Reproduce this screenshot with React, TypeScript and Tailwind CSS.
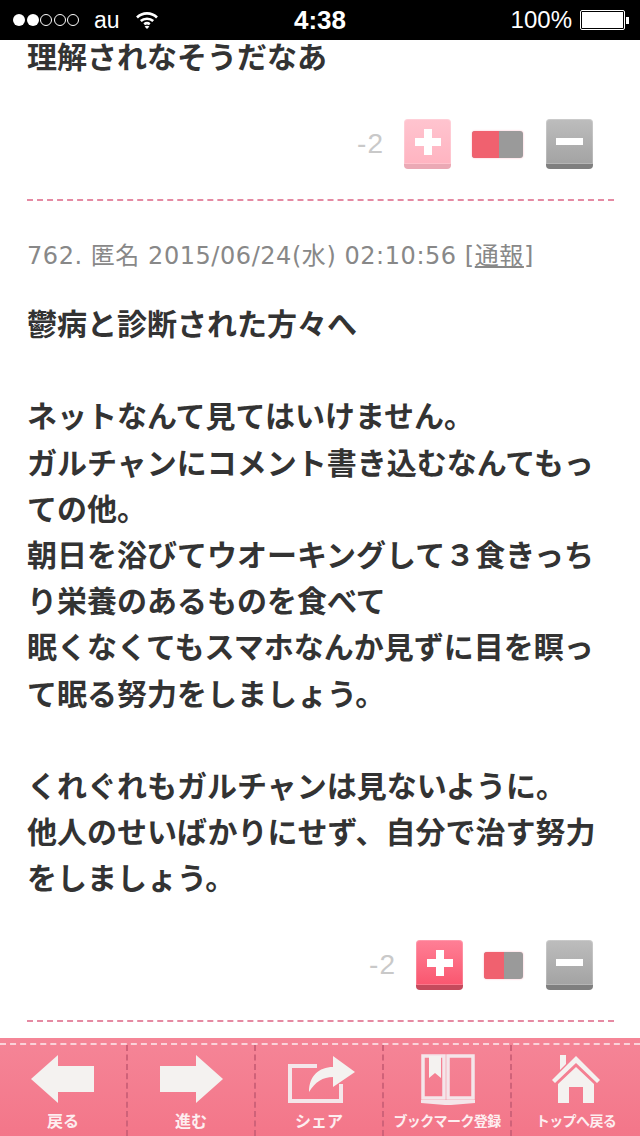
const jp = "font-['Noto_Sans_CJK_JP','Liberation_Sans',sans-serif]"

function StatusBar() {
  return (
    <div className="h-10 shrink-0 bg-black text-white flex items-center justify-between pl-[13px] pr-[11px] font-['Liberation_Sans',sans-serif] relative">
      <div className="flex items-center">
        <div className="flex gap-[1.5px]">
          <span className="w-3 h-3 rounded-full bg-white" />
          <span className="w-3 h-3 rounded-full bg-white" />
          <span className="w-3 h-3 rounded-full border border-white" />
          <span className="w-3 h-3 rounded-full border border-white" />
          <span className="w-3 h-3 rounded-full border border-white" />
        </div>
        <span className="ml-[15px] text-[23px] leading-none">au</span>
        <svg className="ml-[16px]" width="22" height="18" viewBox="0 0 22 18" fill="none" stroke="white" strokeWidth="2.6">
          <path d="M1 6.5 C6.5 1 15.5 1 21 6.5" />
          <path d="M4.8 10 C8 7 14 7 17.2 10" />
          <path d="M8.2 13.2 C9.8 12 12.2 12 13.8 13.2" />
          <path d="M11 18 L8.6 15.4 C10 14.6 12 14.6 13.4 15.4 Z" fill="white" stroke="none" />
        </svg>
      </div>
      <span className="absolute left-[240px] w-[160px] text-center text-[26px] font-bold leading-none">4:38</span>
      <div className="flex items-center">
        <span className="text-[24px] leading-none">100%</span>
        <div className="ml-[8px] w-[45px] h-[20px] border border-white rounded-[2px] p-[1px]">
          <div className="w-full h-full bg-white" />
        </div>
        <span className="ml-px w-[3px] h-[7px] bg-white" />
      </div>
    </div>
  )
}

function VoteRow({ faded, barWidth, redWidth, className }: { faded?: boolean; barWidth: string; redWidth: string; className: string }) {
  return (
    <div className={`flex items-center justify-end pr-[47px] ${className}`}>
      <span className="text-[28px] tracking-[1px] leading-none text-[#c9c9c9] font-['Liberation_Sans',sans-serif] mr-[20px]">-2</span>
      <div className={`w-[47px] h-[50px] rounded-[4px] flex items-center justify-center border-b-[5px] shadow-[inset_0_0_0_1px_rgba(255,255,255,0.2)] ${faded ? "bg-gradient-to-b from-[#ffc4cf] to-[#ffb4c1] border-[#eba9b5]" : "bg-gradient-to-b from-[#ff7f96] to-[#f9566f] border-[#c44a5c]"}`}>
        <svg width="28" height="28" viewBox="0 0 28 28" fill="white"><path d="M10 1h8v9h9v8h-9v9h-8v-9H1v-8h9z" /></svg>
      </div>
      <div className={`${barWidth} h-[27px] ml-[21px] mr-[23px] rounded-[3px] bg-[#9a9a9a] overflow-hidden shadow-[0_0_2px_#ffb4c1]`}>
        <div className={`${redWidth} h-full bg-[#f0616f]`} />
      </div>
      <div className="w-[47px] h-[50px] rounded-[4px] flex items-center justify-center bg-gradient-to-b from-[#bdbdbd] to-[#a3a3a3] border-b-[5px] border-[#7f7f7f] shadow-[inset_0_0_0_1px_rgba(255,255,255,0.2)]">
        <div className="w-[27px] h-[7px] bg-white" />
      </div>
    </div>
  )
}

function Separator({ className }: { className?: string }) {
  return <div className={`mx-[27px] w-[587px] border-t-2 border-dashed border-[#e58aa3] ${className ?? ""}`} />
}

const body = [
  "鬱病と診断された方々へ",
  "",
  "ネットなんて見てはいけません。",
  "ガルチャンにコメント書き込むなんてもっ",
  "ての他。",
  "朝日を浴びてウオーキングして３食きっち",
  "り栄養のあるものを食べて",
  "眠くなくてもスマホなんか見ずに目を瞑っ",
  "て眠る努力をしましょう。",
  "",
  "くれぐれもガルチャンは見ないように。",
  "他人のせいばかりにせず、自分で治す努力",
  "をしましょう。",
]

function FooterItem({ label, children, small }: { label: string; children: React.ReactNode; small?: boolean }) {
  return (
    <div className="w-[128px] h-full flex flex-col items-center relative border-r-2 border-dashed border-[#cf6279] last:border-r-0">
      <div className="h-[62px] flex items-center justify-center mt-[3px]">{children}</div>
      <span className={`${jp} text-[#fdeef0] font-bold leading-[16px] mt-[2px] ${small ? "text-[14px] tracking-[-0.6px]" : "text-[16px]"}`}>{label}</span>
    </div>
  )
}

function Footer() {
  return (
    <div className="h-[98px] shrink-0 bg-gradient-to-b from-[#f58597] to-[#f37689] relative">
      <div className="h-[5px]" />
      <div className="border-t-2 border-dashed border-[#fbd3da]" />
      <div className="flex h-[91px]">
        <FooterItem label="戻る">
          <svg width="64" height="48" viewBox="0 0 64 48" fill="#f4f2f0"><path d="M0 24 L27 0 V11 H63 V37 H27 V48 Z" /></svg>
        </FooterItem>
        <FooterItem label="進む">
          <svg width="64" height="48" viewBox="0 0 64 48" fill="#f4f2f0"><path d="M64 24 L37 0 V11 H1 V37 H37 V48 Z" /></svg>
        </FooterItem>
        <FooterItem label="シェア">
          <svg className="ml-[6px]" width="70" height="50" viewBox="0 0 70 50" fill="none">
            <path d="M30 12H3V47H54V30" stroke="#f4e6ea" strokeWidth="4" />
            <path d="M22 38 C22 22 32 13 46 13 V2 L68 18 L46 33 V23 C36 23 28 28 22 38Z" fill="#f4f2f0" />
          </svg>
        </FooterItem>
        <FooterItem label="ブックマーク登録" small>
          <svg className="ml-[2px] mt-[4px]" width="54" height="54" viewBox="0 0 54 54" fill="none" stroke="#f4e6ea" strokeWidth="3.5">
            <path d="M2 2H23V44H2Z M27 2H52V44H27Z" />
            <path d="M8 2H20V24L14 19L8 24Z" fill="#f4f2f0" stroke="none" />
            <path d="M0 46H54V49L30 51H24L0 49Z" fill="#f4e6ea" stroke="none" />
          </svg>
        </FooterItem>
        <FooterItem label="トップへ戻る" small>
          <svg width="48" height="50" viewBox="0 0 48 50" fill="#f4f2f0">
            <path d="M0 26 L24 2 L48 26 L45 29 L24 9 L3 29Z M8 1H14V10L8 16Z" />
            <path d="M24 13 L42 30 V49 H31 V33 H17 V49 H6 V30Z" />
          </svg>
        </FooterItem>
      </div>
    </div>
  )
}

export default function App() {
  return (
    <div className="w-[640px] h-[1136px] flex flex-col overflow-hidden bg-white">
      <StatusBar />
      <main className="flex-1">
        <p className={`${jp} pl-[27px] text-[30px] leading-[30px] font-semibold text-[#333]`}>理解されなそうだなあ</p>
        <VoteRow faded barWidth="w-[51px]" redWidth="w-[27px]" className="mt-[49px]" />
        <Separator className="mt-[30px]" />
        <p className={`${jp} pl-[27px] mt-[35px] text-[24px] leading-[36px] text-[#888] whitespace-nowrap`}>
          <span className="font-['DejaVu_Sans','Noto_Sans_CJK_JP',sans-serif] tracking-[0.55px]">762. 匿名 2015/06/24(水) 02:10:56 [<span className="underline">通報</span>]</span>
        </p>
        <div className={`${jp} pl-[27px] mt-[25px] text-[30px] leading-[46.2px] font-semibold text-[#333] whitespace-nowrap`}>
          {body.map((line, i) => (
            <div key={i} className="h-[46.2px]">{line}</div>
          ))}
        </div>
        <VoteRow barWidth="w-[39px]" redWidth="w-[20px]" className="mt-[41px]" />
        <Separator className="mt-[30px]" />
      </main>
      <Footer />
    </div>
  )
}
